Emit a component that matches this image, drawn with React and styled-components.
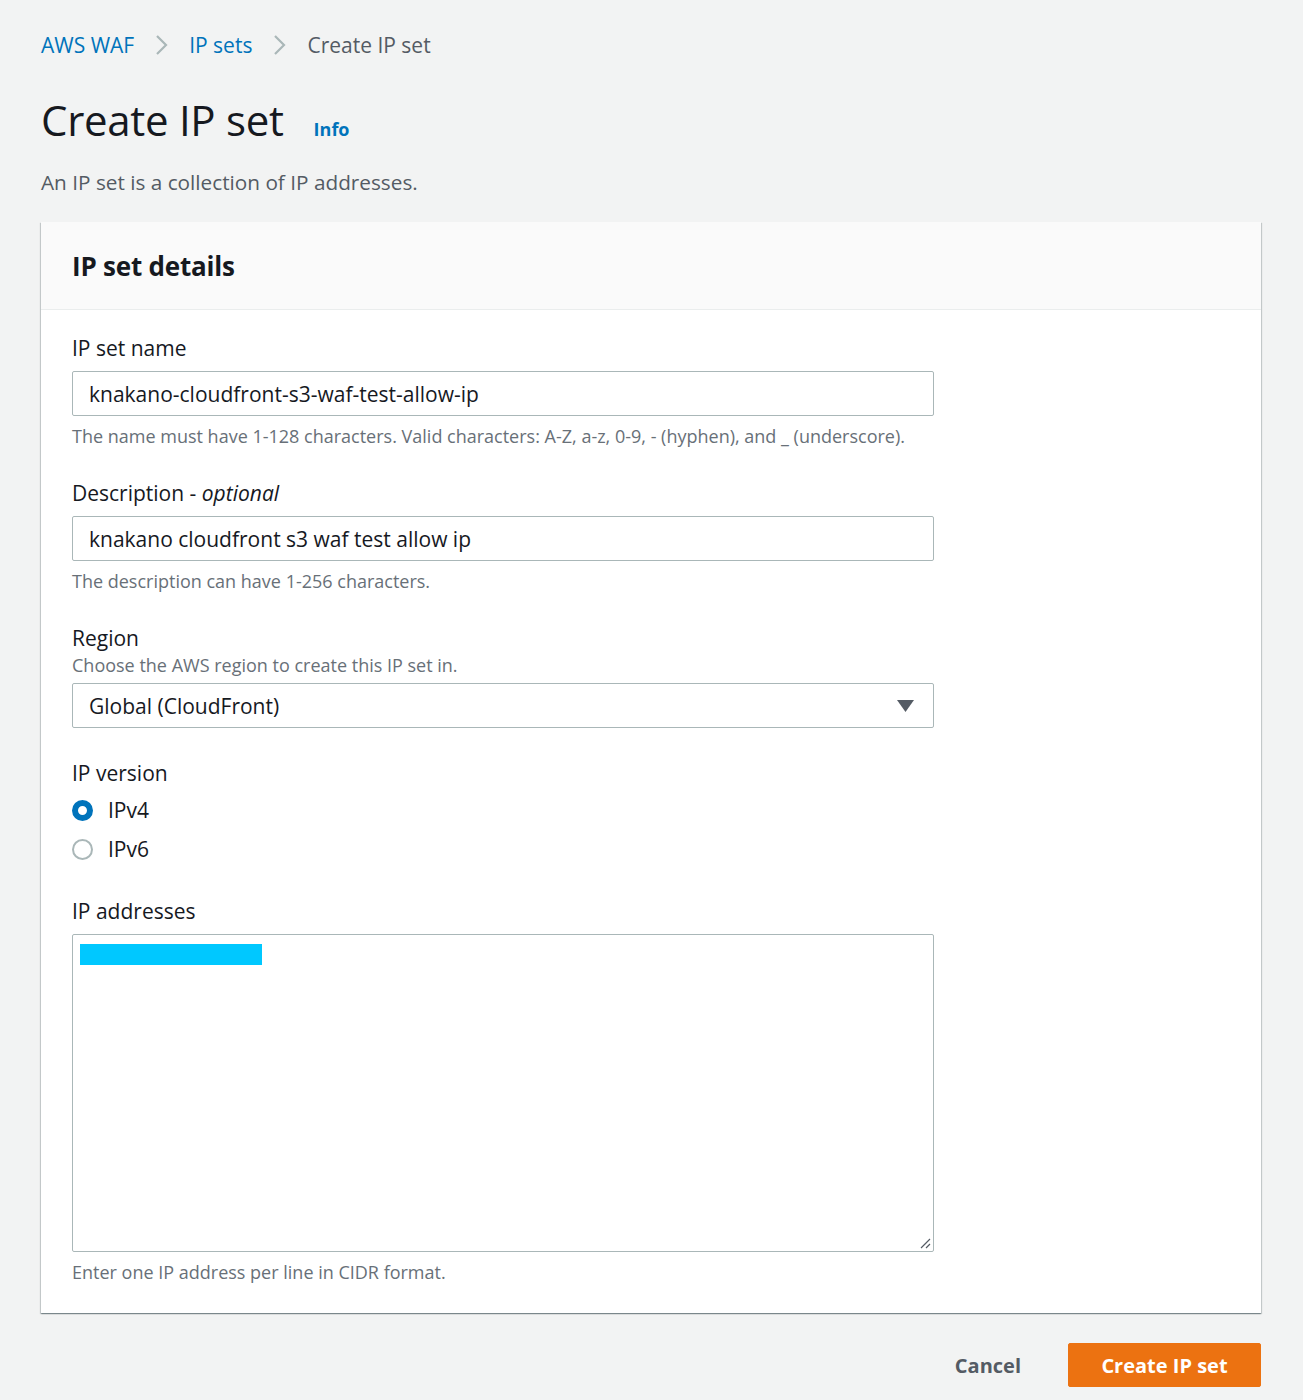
import React from 'react';
import styled, { createGlobalStyle } from 'styled-components';

const GlobalStyle = createGlobalStyle`
    body {
        margin: 0;
        background: #f2f3f3;
        font-family: "Open Sans", "Noto Sans", sans-serif;
        color: #16191f;
    }
`;

const Page = styled.div`
    padding: 28px 42px 12px 41px;
`;

const Breadcrumbs = styled.nav`
    display: flex;
    align-items: center;
    gap: 16px;
    font-size: 21px;
    height: 34px;
`;

const Crumb = styled.a`
    color: ${props => (props.current ? '#545b64' : '#0073bb')};
    text-decoration: none;
`;

const Chevron = styled.svg`
    width: 18px;
    height: 24px;
    margin: 0 2.5px;
`;

const TitleRow = styled.div`
    display: flex;
    align-items: baseline;
    gap: 30px;
    margin-top: 28px;
`;

const Title = styled.h1`
    margin: 0;
    font-size: 42px;
    font-weight: 400;
    letter-spacing: -0.3px;
    line-height: 60px;
`;

const InfoLink = styled.a`
    color: #0073bb;
    font-size: 18px;
    font-weight: 700;
`;

const Lead = styled.p`
    margin: 18px 0 0;
    font-size: 20.75px;
    color: #545b64;
`;

const Card = styled.section`
    margin-top: 26px;
    background: #fff;
    box-shadow: 0 1px 1px 0 rgba(0, 28, 36, 0.3), 1px 1px 1px 0 rgba(0, 28, 36, 0.15),
        -1px 1px 1px 0 rgba(0, 28, 36, 0.15);
`;

const CardHeader = styled.header`
    background: #fafafa;
    border-bottom: 1px solid #eaeded;
    height: 87px;
    display: flex;
    align-items: center;
    padding: 0 31px;
`;

const CardTitle = styled.h2`
    margin: 0;
    font-size: 26px;
    font-weight: 700;
    letter-spacing: -0.2px;
`;

const CardBody = styled.div`
    padding: 23px 31px 29px;
    display: flex;
    flex-direction: column;
    gap: 30px;
`;

const Field = styled.div`
    display: flex;
    flex-direction: column;
    width: 862px;
`;

const Label = styled.label`
    font-size: 21px;
    line-height: 30px;
    margin-bottom: ${props => (props.tight ? '0' : '8px')};
`;

const Optional = styled.i`
    font-style: italic;
`;

const SubLabel = styled.div`
    font-size: 18px;
    color: #687078;
    line-height: 25px;
    margin-bottom: 5px;
`;

const Input = styled.div`
    height: 45px;
    box-sizing: border-box;
    border: 1px solid #aab7b8;
    border-radius: 2px;
    padding: 0 16px;
    display: flex;
    align-items: center;
    justify-content: space-between;
    font-size: 21px;
    background: #fff;
`;

const Caret = styled.svg`
    width: 17px;
    height: 12px;
    margin-right: 3px;
`;

const Hint = styled.div`
    font-size: 18px;
    color: #687078;
    margin-top: 8px;
    line-height: 24px;
`;

const RadioList = styled.div`
    display: flex;
    flex-direction: column;
    gap: 11px;
    margin-top: 8px;
    margin-bottom: 3px;
`;

const RadioRow = styled.div`
    display: flex;
    align-items: center;
    gap: 15px;
    font-size: 21px;
    height: 28px;
`;

const RadioDot = styled.span`
    width: 21px;
    height: 21px;
    box-sizing: border-box;
    border-radius: 50%;
    border: ${props => (props.checked ? '6px solid #0073bb' : '2px solid #aab7b8')};
    background: #fff;
`;

const TextArea = styled.div`
    height: 318px;
    box-sizing: border-box;
    border: 1px solid #aab7b8;
    border-radius: 2px;
    padding: 9px 7px;
    position: relative;
`;

const Redaction = styled.span`
    display: block;
    width: 182px;
    height: 21px;
    background: #00c8ff;
`;

const Grip = styled.svg`
    position: absolute;
    right: 2px;
    bottom: 2px;
    width: 12px;
    height: 12px;
`;

const Actions = styled.div`
    display: flex;
    justify-content: flex-end;
    align-items: center;
    gap: 47px;
    margin-top: 30px;
`;

const LinkButton = styled.button`
    background: none;
    border: none;
    font-family: inherit;
    font-size: 20px;
    font-weight: 700;
    color: #545b64;
    padding: 0;
`;

const PrimaryButton = styled.button`
    background: #ec7211;
    border: 1px solid #ec7211;
    border-radius: 2px;
    color: #fff;
    font-family: inherit;
    font-size: 20px;
    font-weight: 700;
    height: 44px;
    width: 193px;
    padding: 0;
`;

const ChevronIcon = () => (
    <Chevron viewBox="0 0 18 24">
        <path d="M4 3 L13 12 L4 21" fill="none" stroke="#aab7b8" strokeWidth="2.2" />
    </Chevron>
);

export default function App() {
    return (
        <Page>
            <GlobalStyle />
            <Breadcrumbs>
                <Crumb>AWS WAF</Crumb>
                <ChevronIcon />
                <Crumb>IP sets</Crumb>
                <ChevronIcon />
                <Crumb current>Create IP set</Crumb>
            </Breadcrumbs>
            <TitleRow>
                <Title>Create IP set</Title>
                <InfoLink>Info</InfoLink>
            </TitleRow>
            <Lead>An IP set is a collection of IP addresses.</Lead>

            <Card>
                <CardHeader>
                    <CardTitle>IP set details</CardTitle>
                </CardHeader>
                <CardBody>
                    <Field>
                        <Label>IP set name</Label>
                        <Input>knakano-cloudfront-s3-waf-test-allow-ip</Input>
                        <Hint>
                            The name must have 1-128 characters. Valid characters: A-Z, a-z, 0-9, - (hyphen), and _ (underscore).
                        </Hint>
                    </Field>
                    <Field>
                        <Label>
                            Description - <Optional>optional</Optional>
                        </Label>
                        <Input>knakano cloudfront s3 waf test allow ip</Input>
                        <Hint>The description can have 1-256 characters.</Hint>
                    </Field>
                    <Field>
                        <Label tight>Region</Label>
                        <SubLabel>Choose the AWS region to create this IP set in.</SubLabel>
                        <Input>
                            Global (CloudFront)
                            <Caret viewBox="0 0 17 12">
                                <path d="M0 0 H17 L8.5 12 Z" fill="#545b64" />
                            </Caret>
                        </Input>
                    </Field>
                    <Field>
                        <Label tight>IP version</Label>
                        <RadioList>
                            <RadioRow>
                                <RadioDot checked />
                                IPv4
                            </RadioRow>
                            <RadioRow>
                                <RadioDot />
                                IPv6
                            </RadioRow>
                        </RadioList>
                    </Field>
                    <Field>
                        <Label>IP addresses</Label>
                        <TextArea>
                            <Redaction />
                            <Grip viewBox="0 0 12 12">
                                <path d="M11 2 L2 11 M11 7 L7 11" stroke="#545b64" strokeWidth="1.2" />
                            </Grip>
                        </TextArea>
                        <Hint>Enter one IP address per line in CIDR format.</Hint>
                    </Field>
                </CardBody>
            </Card>

            <Actions>
                <LinkButton>Cancel</LinkButton>
                <PrimaryButton>Create IP set</PrimaryButton>
            </Actions>
        </Page>
    );
}
